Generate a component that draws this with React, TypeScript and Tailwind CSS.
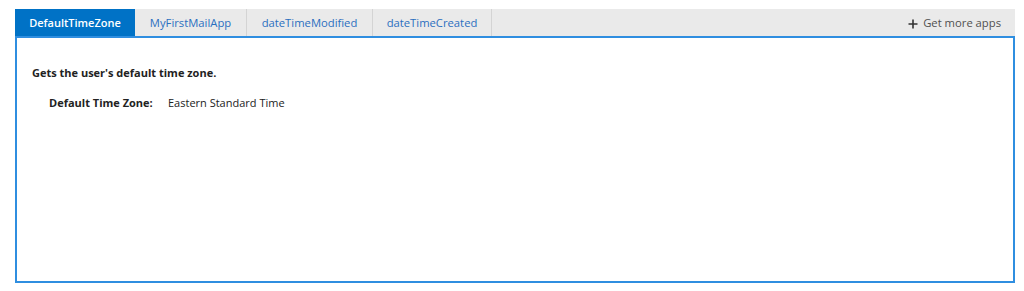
import React from "react";

const tabs = ["MyFirstMailApp", "dateTimeModified", "dateTimeCreated"];

export default function App() {
  return (
    <div
      className="w-[1024px] h-[291px] bg-white pt-[9px] pl-[15px] pr-[9px] pb-[8px] flex flex-col"
      style={{ fontFamily: '"Segoe UI", "Open Sans", "Noto Sans", sans-serif' }}
    >
      <div className="flex h-[27px] bg-[#eaeaea] items-stretch">
        <div className="bg-[#0072c6] text-white font-semibold text-[11px] w-[120px] flex items-center justify-center pt-[2px]">
          DefaultTimeZone
        </div>
        {tabs.map((t, i) => (
          <div
            key={t}
            className={`text-[#2b6fc0] text-[11.25px] flex items-center justify-center pt-[2px] border-r border-[#d4d4d4] ${
              i === 0 ? "w-[112px]" : i === 1 ? "w-[126px]" : "w-[119px]"
            }`}
          >
            {t}
          </div>
        ))}
        <div className="flex-1" />
        <div className="flex items-center pr-[14px] pt-[2px] text-[#505050] text-[11.25px]">
          <svg width="10" height="10" viewBox="0 0 10 10" className="mr-[5px]">
            <path d="M5 0.5V9.5M0.5 5H9.5" stroke="#333333" strokeWidth="1.6" />
          </svg>
          Get more apps
        </div>
      </div>
      <div className="flex-1 border-2 border-[#2f8ee0] px-[15px] pt-[27px] text-[#222222] text-[11px]">
        <div className="font-bold">Gets the user's default time zone.</div>
        <div className="flex mt-[13px] pl-[17px]">
          <span className="font-bold w-[119px]">Default Time Zone:</span>
          <span>Eastern Standard Time</span>
        </div>
      </div>
    </div>
  );
}
